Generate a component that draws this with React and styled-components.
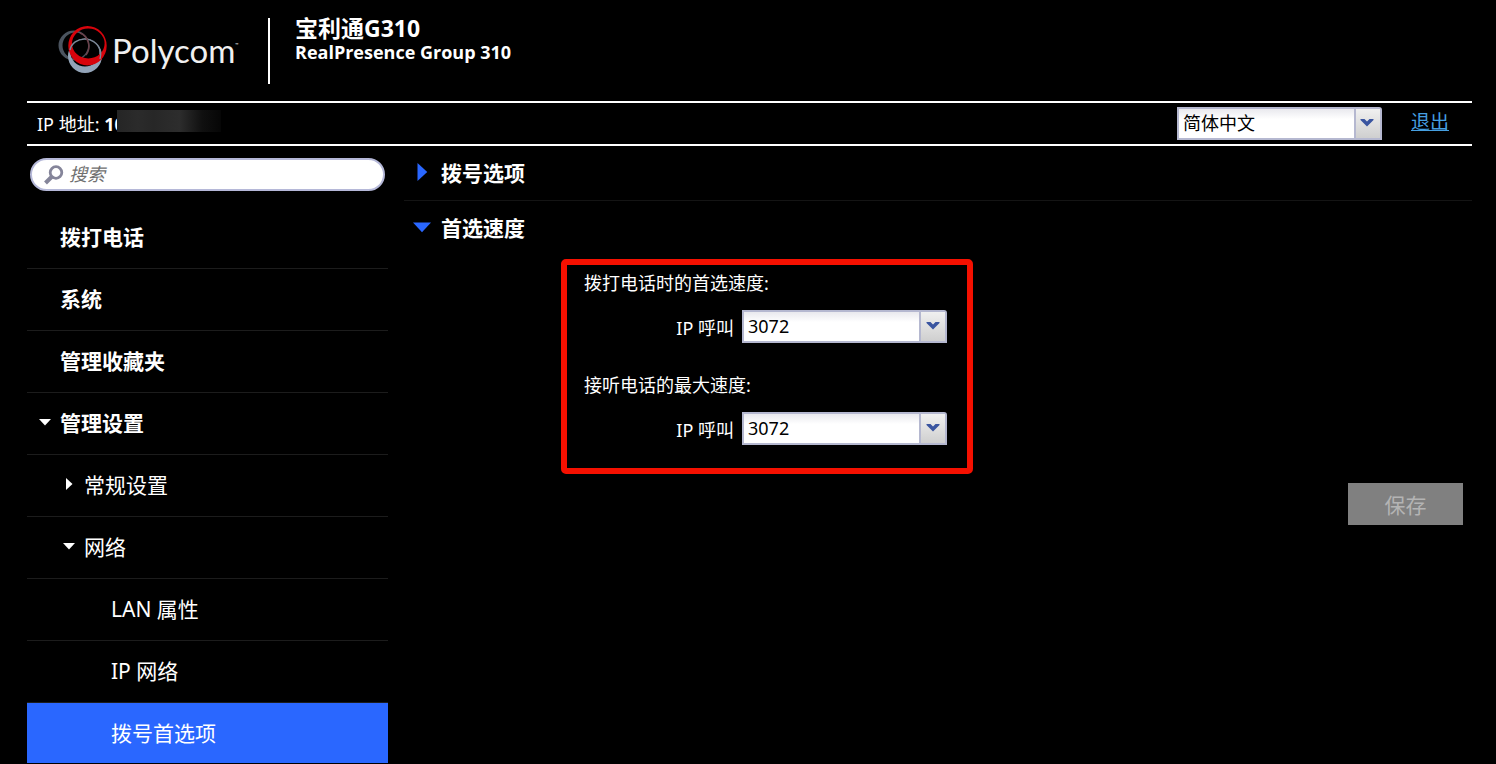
import React, { useState } from "react";
import styled, { createGlobalStyle } from "styled-components";

const navItems = [
  { label: "拨打电话", level: 0 },
  { label: "系统", level: 0 },
  { label: "管理收藏夹", level: 0 },
  { label: "管理设置", level: 0, arrow: "down" },
  { label: "常规设置", level: 1, arrow: "right" },
  { label: "网络", level: 1, arrow: "down" },
  { label: "LAN 属性", level: 2 },
  { label: "IP 网络", level: 2 },
  { label: "拨号首选项", level: 2, active: true },
];

const speeds = ["512", "1024", "2048", "3072"];

const Logo = () => (
  <Brand href="#home" aria-label="Polycom">
    <svg width="50" height="50" viewBox="0 0 50 50" aria-hidden="true">
      <g fillRule="evenodd">
        <path
          fill="#4b545f"
          d="M0.500 20.500a15.500 15 0 1 0 31 0a15.500 15 0 1 0 -31 0zM4.500 20.500a12.800 13 0 1 1 25.600 0a12.800 13 0 1 1 -25.600 0z"
        />
        <path
          fill="#93a4b8"
          d="M10 31a17 17 0 1 0 34 0a17 17 0 1 0 -34 0zM12.500 27.500a14.500 14 0 1 1 29 0a14.500 14 0 1 1 -29 0z"
        />
        <path
          fill="#d8040c"
          d="M10.300 20.800a19.200 19.700 0 1 0 38.400 0a19.200 19.700 0 1 0 -38.400 0zM14 18.500a16.300 15 0 1 1 32.600 0a16.300 15 0 1 1 -32.600 0z"
        />
      </g>
      <g fill="none" stroke="#7b8796" strokeWidth="1.500">
        <path d="M12 25c3 -14 25 -15 30 0c1 3 1 6 0 9" />
        <path stroke="#6b414a" d="M22 8c8 3 12 14 6 22" />
      </g>
    </svg>
    <BrandName>Polycom</BrandName>
    <Mark>™</Mark>
  </Brand>
);

const Triangle = ({ dir, size, color }) => (
  <svg width={size} height={size} viewBox="0 0 12 12" aria-hidden="true">
    <path
      fill={color}
      d={dir === "down" ? "M0 3h12L6 9.500z" : "M3 0v12l6.500 -6z"}
    />
  </svg>
);

const Dropdown = ({ id, label, options, initial }) => {
  const [value, setValue] = useState(initial);
  return (
    <SelectBox>
      <Select
        id={id}
        aria-label={label}
        value={value}
        onChange={(e) => setValue(e.target.value)}
      >
        {options.map((o) => (
          <option key={o}>{o}</option>
        ))}
      </Select>
      <SelectButton>
        <svg width="14" height="8" viewBox="0 0 14 8" aria-hidden="true">
          <path fill="#3a55a0" d="M0.500 0H4.500L7 2.500L9.500 0H13.500V1L7 7.500L0.500 1z" />
        </svg>
      </SelectButton>
    </SelectBox>
  );
};

export default function App() {
  return (
    <Page>
      <GlobalStyle />
      <Header>
        <Logo />
        <Titles>
          <SystemName>宝利通G310</SystemName>
          <Model>RealPresence Group 310</Model>
        </Titles>
      </Header>
      <StatusBar>
        <Address>
          IP 地址: <b>10</b>
          <Redacted />
        </Address>
        <Dropdown
          id="lang"
          label="语言"
          options={["简体中文", "English"]}
          initial="简体中文"
        />
        <Logout href="#logout">退出</Logout>
      </StatusBar>
      <Body>
        <Sidebar>
          <Search>
            <svg width="20" height="20" viewBox="0 0 20 20" aria-hidden="true">
              <g fill="none" stroke="#85859a">
                <circle cx="12" cy="7.500" r="5.800" strokeWidth="2.800" />
                <path d="M8 11.500L1.500 18" strokeWidth="4" />
              </g>
            </svg>
            <SearchInput type="search" placeholder="搜索" aria-label="搜索" />
          </Search>
          <Nav>
            {navItems.map((item) => (
              <NavLink
                key={item.label}
                href="#nav"
                $level={item.level}
                $active={item.active}
              >
                <NavArrow>
                  {item.arrow && (
                    <Triangle dir={item.arrow} size={12} color="#fff" />
                  )}
                </NavArrow>
                {item.label}
              </NavLink>
            ))}
          </Nav>
        </Sidebar>
        <Main>
          <SectionToggle $line aria-expanded="false">
            <Triangle dir="right" size={18} color="#2a67ff" />
            拨号选项
          </SectionToggle>
          <SectionToggle aria-expanded="true">
            <Triangle dir="down" size={18} color="#2a67ff" />
            首选速度
          </SectionToggle>
          <SpeedGroup>
            <SpeedTitle>拨打电话时的首选速度:</SpeedTitle>
            <SpeedRow>
              <label htmlFor="dial-speed">IP 呼叫</label>
              <Dropdown id="dial-speed" options={speeds} initial="3072" />
            </SpeedRow>
            <SpeedTitle>接听电话的最大速度:</SpeedTitle>
            <SpeedRow>
              <label htmlFor="answer-speed">IP 呼叫</label>
              <Dropdown id="answer-speed" options={speeds} initial="3072" />
            </SpeedRow>
          </SpeedGroup>
          <SaveButton disabled>保存</SaveButton>
        </Main>
      </Body>
    </Page>
  );
}

const GlobalStyle = createGlobalStyle`
  * {
    box-sizing: border-box;
  }
  body {
    margin: 0;
    background: #000;
    color: #fff;
    font-family: "Noto Sans", "Noto Sans CJK SC", sans-serif;
    font-size: 18px;
  }
  button, input, select {
    font-family: inherit;
  }
`;

const Page = styled.div`
  padding: 0 24px 0 27px;
`;

const Header = styled.header`
  display: flex;
  align-items: flex-start;
  padding: 18px 0 17px;
`;

const Brand = styled.a`
  display: flex;
  width: 243px;
  height: 66px;
  padding: 7px 0 0 31px;
  border-right: 2px solid #fff;
  color: #f0f0f0;
  text-decoration: none;
`;

const BrandName = styled.span`
  margin-left: 4px;
  font-family: Lato, sans-serif;
  font-size: 33px;
  line-height: 50px;
`;

const Mark = styled.span`
  font-size: 4px;
  line-height: 40px;
`;

const Titles = styled.div`
  padding-left: 25px;
`;

const SystemName = styled.h1`
  margin: 0;
  font-size: 23px;
  line-height: 20px;
`;

const Model = styled.p`
  margin: 0;
  font-family: "Open Sans", sans-serif;
  font-size: 18px;
  font-weight: 700;
  line-height: 28px;
`;

const StatusBar = styled.div`
  display: flex;
  align-items: center;
  height: 45px;
  padding: 0 23px 0 10px;
  border-top: 2px solid #fff;
  border-bottom: 2px solid #fff;
`;

const Address = styled.div`
  position: relative;
  margin-right: auto;
  line-height: 24px;
`;

/* hides the rest of the address */
const Redacted = styled.span`
  position: absolute;
  top: -2px;
  left: 80px;
  width: 104px;
  height: 22px;
  background: linear-gradient(
    90deg,
    #252525,
    #2b2b2b 20%,
    #272727 35%,
    #2d2d2d 60%,
    #101010 82%,
    #060606
  );
`;

const Logout = styled.a`
  margin-left: 29px;
  padding-bottom: 3px;
  color: #469fe0;
  font-size: 19px;
  line-height: 28px;
`;

const SelectBox = styled.div`
  position: relative;
  width: 205px;
  height: 33px;
`;

const Select = styled.select`
  appearance: none;
  width: 100%;
  height: 100%;
  padding: 0 30px 2px 4px;
  border: 2px solid #b5b8d0;
  border-radius: 0 3px 0 0;
  background: linear-gradient(#e9e9ee, #fff 35%);
  color: #000;
  font-size: 18px;
`;

const SelectButton = styled.span`
  position: absolute;
  top: 2px;
  right: 2px;
  bottom: 2px;
  display: grid;
  place-items: center;
  width: 26px;
  padding: 0 1px 2px 0;
  border-left: 2px solid #b5b8d0;
  background: linear-gradient(#f0f0f0, #cfcfcf);
  pointer-events: none;
`;

const Body = styled.div`
  display: flex;
`;

const Sidebar = styled.aside`
  flex: none;
  width: 361px;
`;

const Search = styled.div`
  display: flex;
  align-items: center;
  height: 33px;
  margin: 12px 3px 16px;
  padding: 0 12px;
  border: 2px solid #b5b8d8;
  border-radius: 17px;
  background: #fff;
`;

const SearchInput = styled.input`
  flex: 1;
  min-width: 0;
  padding: 0 5px 2px;
  border: 0;
  outline: 0;
  background: none;
  font-size: 18px;
  &::placeholder {
    color: #707070;
    font-style: italic;
  }
`;

const Nav = styled.nav`
  display: flex;
  flex-direction: column;
`;

const NavLink = styled.a`
  display: flex;
  align-items: center;
  height: 62px;
  padding: 0 0 3px ${(p) => [12, 36, 63][p.$level]}px;
  border-bottom: 1px solid #1c1c1c;
  background: ${(p) => (p.$active ? "#2a67ff" : "none")};
  color: #fff;
  font-size: 21px;
  font-weight: ${(p) => (p.$level === 0 ? 700 : 400)};
  text-decoration: none;
  &:last-child {
    height: 60px;
    border-bottom: 0;
  }
`;

const NavArrow = styled.span`
  display: flex;
  width: 21px;
`;

const Main = styled.main`
  display: flex;
  flex: 1;
  flex-direction: column;
  align-items: flex-start;
  padding-left: 16px;
`;

const SectionToggle = styled.button`
  display: flex;
  align-items: center;
  gap: 10px;
  width: 100%;
  height: 55px;
  padding: 0 0 3px 9px;
  border: 0;
  border-bottom: 1px solid ${(p) => (p.$line ? "#141414" : "transparent")};
  background: none;
  color: #fff;
  font-size: 21px;
  font-weight: 700;
`;

const SpeedGroup = styled.section`
  width: 412px;
  margin: 3px 0 9px 157px;
  padding: 5px 20px 23px 17px;
  border: 6px solid #f51000;
  border-radius: 5px;
`;

const SpeedTitle = styled.p`
  margin: 0;
  line-height: 26px;
`;

const SpeedRow = styled.div`
  display: flex;
  align-items: center;
  justify-content: flex-end;
  gap: 8px;
  padding: 14px 0 0;
  & + p {
    margin-top: 29px;
  }
`;

const SaveButton = styled.button`
  align-self: flex-end;
  width: 115px;
  height: 42px;
  margin-right: 9px;
  border: 0;
  background: #808080;
  color: #b4b4b4;
  font-size: 21px;
`;
